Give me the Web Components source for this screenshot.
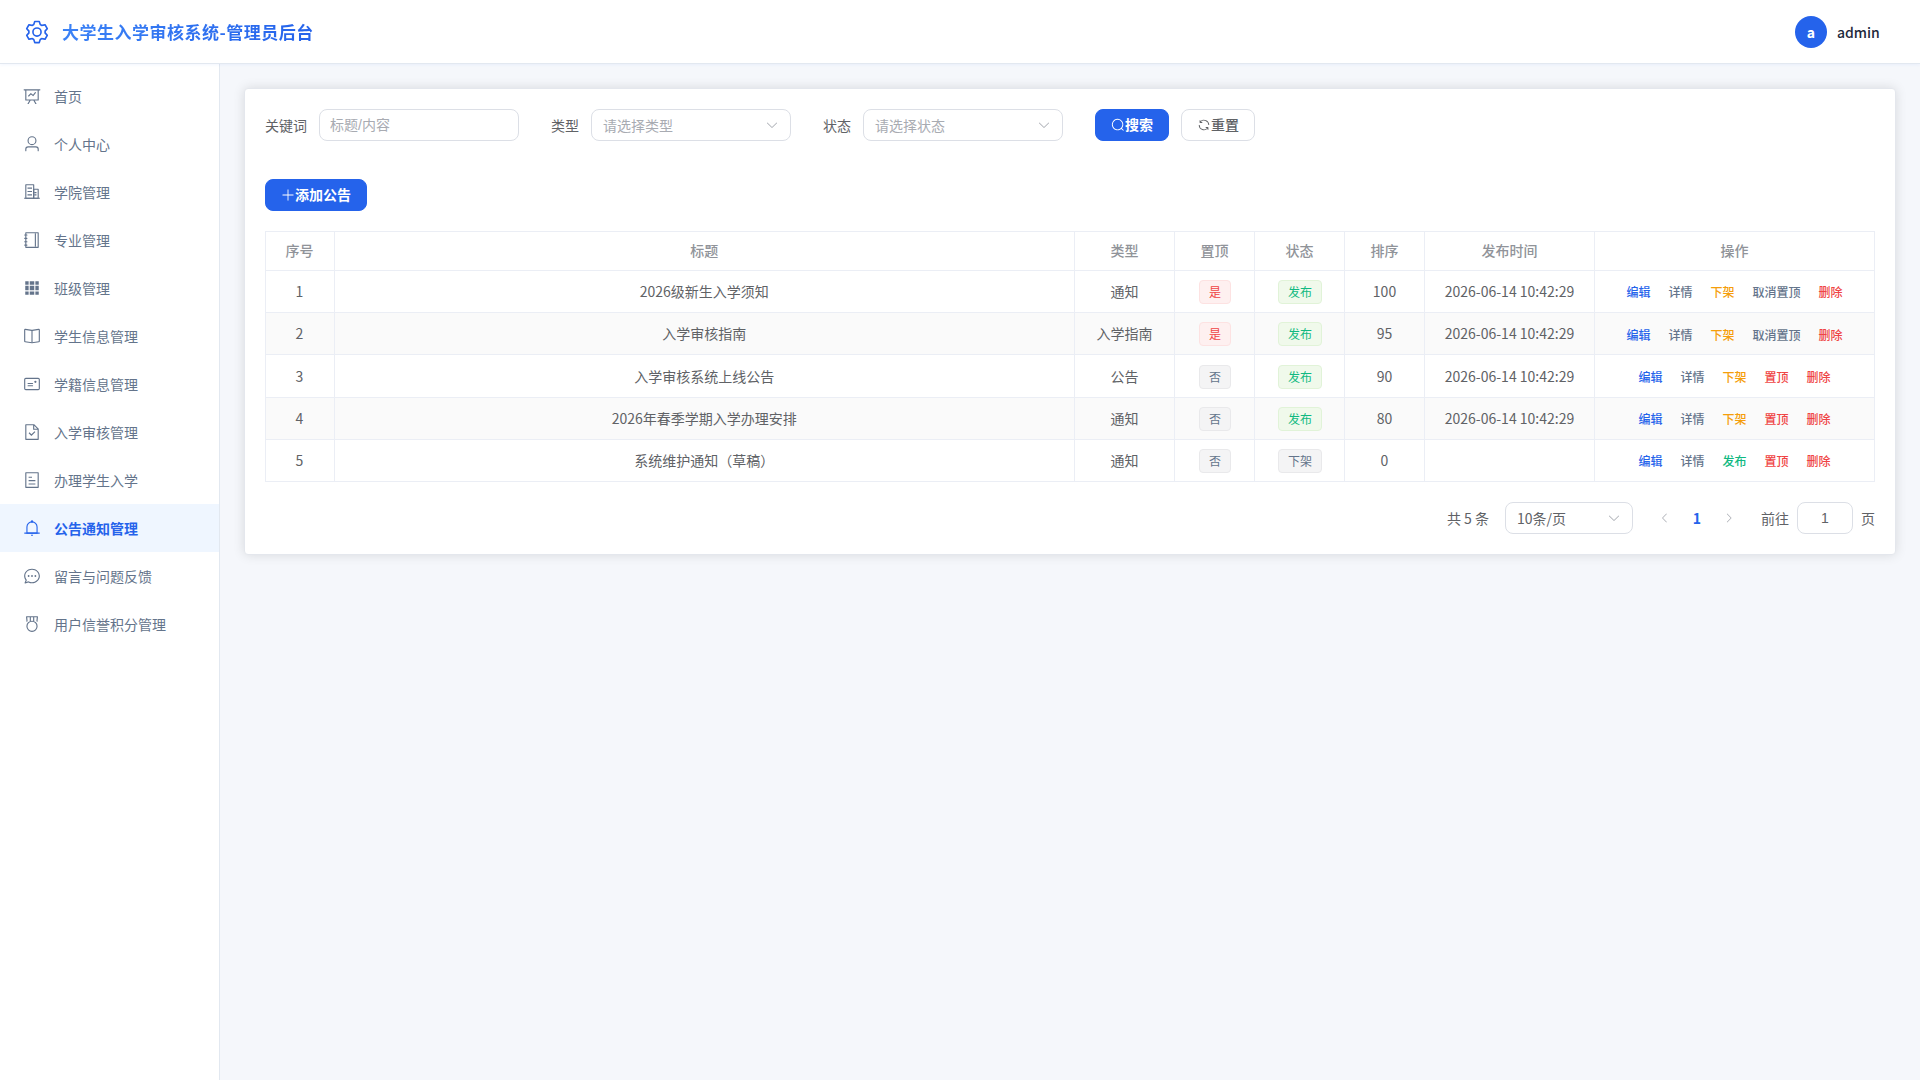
<!DOCTYPE html>
<html lang="zh-CN">
<head>
<meta charset="utf-8">
<title>大学生入学审核系统-管理员后台</title>
<style>
  html, body {
    margin: 0;
    height: 100%;
    overflow: hidden;
  }
  body {
    font-family: "Noto Sans CJK SC", sans-serif;
    font-size: 14px;
    color: #606266;
    background: #f5f7fb;
  }
</style>
</head>
<body>
<admin-layout>
  <admin-header slot="header" title-text="大学生入学审核系统-管理员后台" user="admin"></admin-header>
  <side-menu slot="aside">
    <menu-item icon="dataLine">首页</menu-item>
    <menu-item icon="user">个人中心</menu-item>
    <menu-item icon="office">学院管理</menu-item>
    <menu-item icon="notebook">专业管理</menu-item>
    <menu-item icon="grid">班级管理</menu-item>
    <menu-item icon="reading">学生信息管理</menu-item>
    <menu-item icon="postcard">学籍信息管理</menu-item>
    <menu-item icon="docChecked">入学审核管理</menu-item>
    <menu-item icon="tickets">办理学生入学</menu-item>
    <menu-item icon="bell" active>公告通知管理</menu-item>
    <menu-item icon="chat">留言与问题反馈</menu-item>
    <menu-item icon="medal">用户信誉积分管理</menu-item>
  </side-menu>
  <page-card>
    <search-form>
      <form-item label="关键词"><text-input placeholder="标题/内容"></text-input></form-item>
      <form-item label="类型"><select-box placeholder="请选择类型"></select-box></form-item>
      <form-item label="状态"><select-box placeholder="请选择状态"></select-box></form-item>
      <ui-button slot="actions" type="primary" icon="search">搜索</ui-button>
      <ui-button slot="actions" icon="refresh">重置</ui-button>
    </search-form>
    <ui-button class="add" type="primary" icon="plus">添加公告</ui-button>
    <notice-table></notice-table>
    <page-nav total="5"></page-nav>
  </page-card>
</admin-layout>

<script>
const ICONS = {
  setting: 'M600.704 64a32 32 0 0 1 30.464 22.208l35.2 109.376c14.784 7.232 28.928 15.36 42.432 24.512l112.384-24.192a32 32 0 0 1 34.432 15.36L944.32 364.8a32 32 0 0 1-4.032 37.504l-77.12 85.12a357.12 357.12 0 0 1 0 49.024l77.12 85.248a32 32 0 0 1 4.032 37.504l-88.704 153.6a32 32 0 0 1-34.432 15.296L708.8 803.904c-13.44 9.088-27.648 17.28-42.368 24.512l-35.264 109.376A32 32 0 0 1 600.704 960H423.296a32 32 0 0 1-30.464-22.208L357.696 828.48a351.616 351.616 0 0 1-42.56-24.64l-112.32 24.256a32 32 0 0 1-34.432-15.36L79.68 659.2a32 32 0 0 1 4.032-37.504l77.12-85.248a357.12 357.12 0 0 1 0-48.896l-77.12-85.248A32 32 0 0 1 79.68 364.8l88.704-153.6a32 32 0 0 1 34.432-15.296l112.32 24.256c13.568-9.152 27.776-17.408 42.56-24.64l35.2-109.312A32 32 0 0 1 423.232 64H600.64zm-23.424 64H446.72l-36.352 113.088-24.512 11.968a294.113 294.113 0 0 0-34.816 20.096l-22.656 15.36-116.224-25.088-65.28 113.152 79.68 88.192-1.92 27.136a293.12 293.12 0 0 0 0 40.192l1.92 27.136-79.808 88.192 65.344 113.152 116.224-25.024 22.656 15.296a294.113 294.113 0 0 0 34.816 20.096l24.512 11.968L446.72 896h130.688l36.48-113.152 24.448-11.904a288.282 288.282 0 0 0 34.752-20.096l22.592-15.296 116.288 25.024 65.28-113.152-79.744-88.192 1.92-27.136a293.12 293.12 0 0 0 0-40.256l-1.92-27.136 79.808-88.128-65.344-113.152-116.288 24.96-22.592-15.232a287.616 287.616 0 0 0-34.752-20.096l-24.448-11.904L577.344 128zM512 320a192 192 0 1 1 0 384 192 192 0 0 1 0-384m0 64a128 128 0 1 0 0 256 128 128 0 0 0 0-256',
  dataLine: 'M359.168 768H160a32 32 0 0 1-32-32V192H64a32 32 0 0 1 0-64h896a32 32 0 1 1 0 64h-64v544a32 32 0 0 1-32 32H665.216l110.848 192h-73.856L591.36 768H433.024L322.176 960H248.32zM832 192H192v512h640zM342.656 534.656a32 32 0 1 1-45.312-45.312L444.992 341.76l125.44 94.08L679.04 300.032a32 32 0 1 1 49.92 39.936L581.632 524.224 451.008 426.24 342.656 534.592z',
  user: 'M512 512a192 192 0 1 0 0-384 192 192 0 0 0 0 384m0 64a256 256 0 1 1 0-512 256 256 0 0 1 0 512m320 320v-96a96 96 0 0 0-96-96H288a96 96 0 0 0-96 96v96a32 32 0 1 1-64 0v-96a160 160 0 0 1 160-160h448a160 160 0 0 1 160 160v96a32 32 0 1 1-64 0',
  office: ['M192 128v704h384V128zm-32-64h448a32 32 0 0 1 32 32v768a32 32 0 0 1-32 32H160a32 32 0 0 1-32-32V96a32 32 0 0 1 32-32', 'M256 256h256v64H256zm0 192h256v64H256zm0 192h256v64H256zm384-128h128v64H640zm0 128h128v64H640zM64 832h896v64H64z', 'M640 384v448h192V384zm-32-64h256a32 32 0 0 1 32 32v512a32 32 0 0 1-32 32H608a32 32 0 0 1-32-32V352a32 32 0 0 1 32-32'],
  notebook: ['M192 128v768h640V128zm-32-64h704a32 32 0 0 1 32 32v832a32 32 0 0 1-32 32H160a32 32 0 0 1-32-32V96a32 32 0 0 1 32-32', 'M672 128h64v768h-64zM96 192h128q32 0 32 32t-32 32H96q-32 0-32-32t32-32m0 192h128q32 0 32 32t-32 32H96q-32 0-32-32t32-32m0 192h128q32 0 32 32t-32 32H96q-32 0-32-32t32-32m0 192h128q32 0 32 32t-32 32H96q-32 0-32-32t32-32'],
  grid: 'M640 384v256H384V384zm64 0h192v256H704zm-64 512H384V704h256zm64 0V704h192v192zm-64-768v192H384V128zm64 0h192v192H704zM320 384v256H128V384zm0 512H128V704h192zm0-768v192H128V128z',
  reading: ['m512 863.36 384-54.848v-638.72L525.568 222.72a96 96 0 0 1-27.136 0L128 169.792v638.72zM137.024 106.432l370.432 52.928a32 32 0 0 0 9.088 0l370.432-52.928A64 64 0 0 1 960 169.792v638.72a64 64 0 0 1-54.976 63.36l-388.48 55.488a32 32 0 0 1-9.088 0l-388.48-55.488A64 64 0 0 1 64 808.512v-638.72a64 64 0 0 1 73.024-63.36', 'M480 192h64v704h-64z'],
  postcard: ['M160 224a32 32 0 0 0-32 32v512a32 32 0 0 0 32 32h704a32 32 0 0 0 32-32V256a32 32 0 0 0-32-32zm0-64h704a96 96 0 0 1 96 96v512a96 96 0 0 1-96 96H160a96 96 0 0 1-96-96V256a96 96 0 0 1 96-96', 'M704 320a64 64 0 1 1 0 128 64 64 0 0 1 0-128M288 448h256q32 0 32 32t-32 32H288q-32 0-32-32t32-32m0 128h256q32 0 32 32t-32 32H288q-32 0-32-32t32-32'],
  docChecked: 'M805.504 320 640 154.496V320zM832 384H576V128H192v768h640zM160 64h480l256 256v608a32 32 0 0 1-32 32H160a32 32 0 0 1-32-32V96a32 32 0 0 1 32-32m318.4 582.144 180.992-180.992L704.64 510.4 478.4 736.64 320 578.304l45.248-45.312z',
  tickets: 'M192 128v768h640V128zm-32-64h704a32 32 0 0 1 32 32v832a32 32 0 0 1-32 32H160a32 32 0 0 1-32-32V96a32 32 0 0 1 32-32m160 448h384v64H320zm0-192h192v64H320zm0 384h384v64H320z',
  bell: ['M512 64a64 64 0 0 1 64 64v64H448v-64a64 64 0 0 1 64-64', 'M256 768h512V448a256 256 0 1 0-512 0zm256-640a320 320 0 0 1 320 320v384H192V448a320 320 0 0 1 320-320', 'M96 768h832q32 0 32 32t-32 32H96q-32 0-32-32t32-32m352 128h128a64 64 0 0 1-128 0'],
  chat: ['m174.72 855.68 135.296-45.12 23.68 11.84C388.096 849.536 448.576 864 512 864c211.84 0 384-166.784 384-352S723.84 160 512 160 128 326.784 128 512c0 69.12 24.96 139.264 70.848 199.232l22.08 28.8-46.272 115.584zm-45.248 82.56A32 32 0 0 1 89.6 896l58.368-145.92C94.72 680.32 64 596.864 64 512 64 299.904 256 96 512 96s448 203.904 448 416-192 416-448 416a461.056 461.056 0 0 1-206.912-48.384l-175.616 58.56z', 'M512 563.2a51.2 51.2 0 1 1 0-102.4 51.2 51.2 0 0 1 0 102.4m192 0a51.2 51.2 0 1 1 0-102.4 51.2 51.2 0 0 1 0 102.4m-384 0a51.2 51.2 0 1 1 0-102.4 51.2 51.2 0 0 1 0 102.4'],
  medal: ['M512 896a256 256 0 1 0 0-512 256 256 0 0 0 0 512m0 64a320 320 0 1 1 0-640 320 320 0 0 1 0 640', 'M171 96a32 32 0 0 1 32-32h618a32 32 0 0 1 32 32l-30 300-62-40 22-228H640v219h-64V128H448v219h-64V128H241l22 228-62 40z'],
  down: 'M831.872 340.864 512 652.672 192.128 340.864a30.592 30.592 0 0 0-42.752 0 29.12 29.12 0 0 0 0 41.6L489.664 714.24a32 32 0 0 0 44.672 0l340.288-331.712a29.12 29.12 0 0 0 0-41.728 30.592 30.592 0 0 0-42.752 0z',
  left: 'M609.408 149.376 277.76 489.6a32 32 0 0 0 0 44.672l331.648 340.352a29.12 29.12 0 0 0 41.728 0 30.592 30.592 0 0 0 0-42.752L339.264 511.936l311.872-319.872a30.592 30.592 0 0 0 0-42.688 29.12 29.12 0 0 0-41.728 0',
  right: 'M340.864 149.312a30.592 30.592 0 0 0 0 42.752L652.736 512 340.864 831.872a30.592 30.592 0 0 0 0 42.752 29.12 29.12 0 0 0 41.728 0L714.24 534.336a32 32 0 0 0 0-44.672L382.592 149.376a29.12 29.12 0 0 0-41.728 0z',
  search: 'm795.904 750.72 124.992 124.928a32 32 0 0 1-45.248 45.248L750.656 795.904a416 416 0 1 1 45.248-45.248zM480 832a352 352 0 1 0 0-704 352 352 0 0 0 0 704',
  refresh: 'M771.776 794.88A384 384 0 0 1 128 512h64a320 320 0 0 0 555.712 216.448H654.72a32 32 0 1 1 0-64h149.056a32 32 0 0 1 32 32v148.928a32 32 0 1 1-64 0v-50.56zM276.288 295.616h92.992a32 32 0 0 1 0 64H220.16a32 32 0 0 1-32-32V178.56a32 32 0 0 1 64 0v50.56A384 384 0 0 1 896.128 512h-64a320 320 0 0 0-555.776-216.384z',
  plus: 'M480 480V128a32 32 0 0 1 64 0v352h352a32 32 0 1 1 0 64H544v352a32 32 0 1 1-64 0V544H128a32 32 0 0 1 0-64z'
};

const ROWS = [
  { title: '2026级新生入学须知', type: '通知', top: true, online: true, sort: 100, time: '2026-06-14 10:42:29' },
  { title: '入学审核指南', type: '入学指南', top: true, online: true, sort: 95, time: '2026-06-14 10:42:29' },
  { title: '入学审核系统上线公告', type: '公告', top: false, online: true, sort: 90, time: '2026-06-14 10:42:29' },
  { title: '2026年春季学期入学办理安排', type: '通知', top: false, online: true, sort: 80, time: '2026-06-14 10:42:29' },
  { title: '系统维护通知（草稿）', type: '通知', top: false, online: false, sort: 0, time: '' }
];

class BaseElement extends HTMLElement {
  connectedCallback() {
    if (this.shadowRoot) return;
    this.attachShadow({ mode: 'open' }).innerHTML = this.template();
  }

  attr(name) {
    return this.getAttribute(name) || '';
  }
}

class UiIcon extends BaseElement {
  template() {
    const paths = [].concat(ICONS[this.attr('name')]);
    return `
      <style>
        :host { display: inline-flex; flex: none; width: 1em; height: 1em; }
        svg { width: 1em; height: 1em; fill: currentColor; }
      </style>
      <svg viewBox="0 0 1024 1024">${paths.map((d) => `<path d="${d}"/>`).join('')}</svg>
    `;
  }
}

class AdminLayout extends BaseElement {
  template() {
    return `
      <style>
        :host { display: flex; flex-direction: column; height: 100vh; }
        .body { display: flex; flex: 1; min-height: 0; }
        main { flex: 1; min-width: 0; padding: 24px; box-sizing: border-box; }
      </style>
      <slot name="header"></slot>
      <div class="body">
        <slot name="aside"></slot>
        <main><slot></slot></main>
      </div>
    `;
  }
}

class AdminHeader extends BaseElement {
  template() {
    return `
      <style>
        :host {
          display: flex;
          align-items: center;
          justify-content: space-between;
          flex: none;
          box-sizing: border-box;
          height: 64px;
          padding: 1px 40.2px 0 24px;
          background: #fff;
          border-bottom: 1px solid #e2e8f0;
          box-shadow: 0 1px 3px rgba(37, 99, 235, 0.06);
          z-index: 1;
        }
        .brand { display: flex; align-items: center; gap: 12px; }
        ui-icon { font-size: 26px; color: #2563eb; }
        .title {
          padding-bottom: 2px;
          font-size: 17px;
          font-weight: 700;
          letter-spacing: 0.5px;
          background: linear-gradient(90deg, #3b82f6, #2563eb);
          -webkit-background-clip: text;
          background-clip: text;
          color: transparent;
        }
        .user { display: flex; align-items: center; gap: 10px; color: #1e293b; font-weight: 500; }
        .avatar {
          display: flex;
          align-items: center;
          justify-content: center;
          width: 32px;
          height: 32px;
          border-radius: 50%;
          background: #2563eb;
          color: #fff;
          font-weight: 700;
        }
      </style>
      <div class="brand">
        <ui-icon name="setting"></ui-icon>
        <span class="title">${this.attr('title-text')}</span>
      </div>
      <div class="user">
        <span class="avatar">${this.attr('user')[0]}</span>
        <span>${this.attr('user')}</span>
      </div>
    `;
  }
}

class SideMenu extends BaseElement {
  template() {
    return `
      <style>
        :host {
          display: flex;
          flex-direction: column;
          flex: none;
          box-sizing: border-box;
          width: 220px;
          padding-top: 8px;
          background: #fff;
          border-right: 1px solid #e2e8f0;
        }
      </style>
      <slot></slot>
    `;
  }
}

class MenuItem extends BaseElement {
  template() {
    return `
      <style>
        :host { display: flex; align-items: center; height: 48px; padding-left: 20px; color: #64748b; }
        :host([active]) { background: #eff6ff; color: #2563eb; font-weight: 600; }
        .icon { display: flex; justify-content: center; width: 24px; margin-right: 10px; font-size: 18px; }
      </style>
      <span class="icon"><ui-icon name="${this.attr('icon')}"></ui-icon></span>
      <slot></slot>
    `;
  }
}

class PageCard extends BaseElement {
  template() {
    return `
      <style>
        :host {
          display: flex;
          flex-direction: column;
          align-items: stretch;
          padding: 20px;
          background: #fff;
          border: 1px solid #e4e7ed;
          border-radius: 4px;
          box-shadow: 0 0 12px rgba(0, 0, 0, 0.12);
        }
        ::slotted(.add) { align-self: flex-start; margin: 38px 0 20px; }
      </style>
      <slot></slot>
    `;
  }
}

class SearchForm extends BaseElement {
  template() {
    return `
      <style>
        :host { display: flex; gap: 32px; }
        .actions { display: flex; gap: 12px; }
      </style>
      <slot></slot>
      <div class="actions"><slot name="actions"></slot></div>
    `;
  }
}

class FormItem extends BaseElement {
  template() {
    return `
      <style>
        :host { display: flex; gap: 12px; line-height: 32px; }
      </style>
      <span>${this.attr('label')}</span>
      <slot></slot>
    `;
  }
}

class TextInput extends BaseElement {
  template() {
    return `
      <style>
        :host {
          display: flex;
          align-items: center;
          box-sizing: border-box;
          width: 200px;
          height: 32px;
          padding: 0 10px;
          border: 1px solid #dcdfe6;
          border-radius: 8px;
          background: #fff;
        }
        input {
          width: 100%;
          height: 30px;
          padding: 0;
          border: 0;
          outline: none;
          background: none;
          font: 14px "Liberation Sans", "Noto Sans CJK SC", sans-serif;
          color: inherit;
          text-align: inherit;
        }
        input::placeholder { color: #a8abb2; }
      </style>
      <input type="text" placeholder="${this.attr('placeholder')}" value="${this.attr('value')}">
    `;
  }
}

class SelectBox extends BaseElement {
  template() {
    const value = this.attr('value');
    return `
      <style>
        :host {
          display: flex;
          align-items: center;
          justify-content: space-between;
          box-sizing: border-box;
          width: 200px;
          height: 32px;
          padding: 0 11px;
          border: 1px solid #dcdfe6;
          border-radius: 8px;
          background: #fff;
          line-height: 24px;
        }
        .placeholder { color: #a8abb2; }
        ui-icon { color: #a8abb2; }
      </style>
      <span class="${value ? '' : 'placeholder'}">${value || this.attr('placeholder')}</span>
      <ui-icon name="down"></ui-icon>
    `;
  }
}

class UiButton extends BaseElement {
  template() {
    return `
      <style>
        :host {
          display: inline-flex;
          align-items: center;
          box-sizing: border-box;
          height: 32px;
          padding: 0 15px;
          border: 1px solid #dcdfe6;
          border-radius: 8px;
          background: #fff;
          font-weight: 500;
          line-height: 1;
        }
        :host([type="primary"]) { background: #2563eb; border-color: #2563eb; color: #fff; font-weight: 600; }
        .text { padding-bottom: 2px; }
      </style>
      <ui-icon name="${this.attr('icon')}"></ui-icon><span class="text"><slot></slot></span>
    `;
  }
}

class UiTag extends BaseElement {
  template() {
    return `
      <style>
        :host {
          display: inline-flex;
          align-items: center;
          box-sizing: border-box;
          height: 24px;
          padding: 0 9px;
          border: 1px solid #e9e9eb;
          border-radius: 4px;
          background: #f4f4f5;
          color: #64748b;
          font-size: 12px;
          line-height: 1;
        }
        :host([type="danger"]) { background: #fef0f0; border-color: #fde2e2; color: #ef4444; }
        :host([type="success"]) { background: #f0f9eb; border-color: #e1f3d8; color: #10b981; }
      </style>
      <slot></slot>
    `;
  }
}

class NoticeTable extends BaseElement {
  template() {
    const heads = ['序号', '标题', '类型', '置顶', '状态', '排序', '发布时间', '操作'];
    return `
      <style>
        :host {
          --line: #ebeef5;
          display: block;
          box-sizing: border-box;
          border-left: 1px solid var(--line);
          border-top: 1px solid var(--line);
        }
        .row {
          display: grid;
          grid-template-columns: 69px 1fr 100px 80px 90px 80px 170px 280px;
          height: 42.2px;
        }
        .row.head { height: 39px; color: #909399; font-weight: 500; }
        .row.striped { background: #fafafa; }
        .cell {
          display: flex;
          align-items: center;
          justify-content: center;
          box-sizing: border-box;
          padding-top: 0.2px;
          border-right: 1px solid var(--line);
          border-bottom: 1px solid var(--line);
          line-height: 23px;
        }
        .cell:first-child { padding-right: 1px; }
        .cell:nth-child(2) { padding-right: 0.6px; }
        .head .cell { padding-top: 0; padding-bottom: 2px; }
        .cell.tag { padding: 1.2px 0 0 1px; }
        .cell.ops { padding-top: 0.6px; gap: 18px; font-size: 12px; font-weight: 500; color: #64748b; }
        .blue { color: #2563eb; }
        .orange { color: #f59e0b; }
        .green { color: #10b981; }
        .red { color: #ef4444; }
      </style>
      <div class="row head">${heads.map((h) => `<div class="cell">${h}</div>`).join('')}</div>
      ${ROWS.map((row, i) => this.renderRow(row, i)).join('')}
    `;
  }

  renderRow(row, i) {
    return `
      <div class="row ${i % 2 ? 'striped' : ''}">
        <div class="cell">${i + 1}</div>
        <div class="cell">${row.title}</div>
        <div class="cell">${row.type}</div>
        <div class="cell tag"><ui-tag type="${row.top ? 'danger' : 'info'}">${row.top ? '是' : '否'}</ui-tag></div>
        <div class="cell tag"><ui-tag type="${row.online ? 'success' : 'info'}">${row.online ? '发布' : '下架'}</ui-tag></div>
        <div class="cell">${row.sort}</div>
        <div class="cell">${row.time}</div>
        <div class="cell ops">
          <span class="blue">编辑</span>
          <span>详情</span>
          <span class="${row.online ? 'orange' : 'green'}">${row.online ? '下架' : '发布'}</span>
          <span class="${row.top ? '' : 'red'}">${row.top ? '取消置顶' : '置顶'}</span>
          <span class="red">删除</span>
        </div>
      </div>
    `;
  }
}

class PageNav extends BaseElement {
  template() {
    return `
      <style>
        :host { display: flex; align-items: center; justify-content: flex-end; gap: 16px; margin-top: 20px; line-height: 32px; height: 32px; }
        select-box { width: 128px; }
        .pager { display: flex; }
        .pager > * { display: flex; align-items: center; justify-content: center; width: 32px; height: 32px; }
        .arrow { font-size: 12px; color: #a8abb2; }
        .current { color: #2563eb; font-weight: 700; }
        .jump { display: flex; align-items: center; gap: 8px; }
        text-input { width: 56px; text-align: center; }
      </style>
      <span>共 ${this.attr('total')} 条</span>
      <select-box value="10条/页"></select-box>
      <div class="pager">
        <span class="arrow"><ui-icon name="left"></ui-icon></span>
        <span class="current">1</span>
        <span class="arrow"><ui-icon name="right"></ui-icon></span>
      </div>
      <div class="jump">
        <span>前往</span>
        <text-input value="1"></text-input>
        <span>页</span>
      </div>
    `;
  }
}

customElements.define('ui-icon', UiIcon);
customElements.define('admin-layout', AdminLayout);
customElements.define('admin-header', AdminHeader);
customElements.define('side-menu', SideMenu);
customElements.define('menu-item', MenuItem);
customElements.define('page-card', PageCard);
customElements.define('search-form', SearchForm);
customElements.define('form-item', FormItem);
customElements.define('text-input', TextInput);
customElements.define('select-box', SelectBox);
customElements.define('ui-button', UiButton);
customElements.define('ui-tag', UiTag);
customElements.define('notice-table', NoticeTable);
customElements.define('page-nav', PageNav);
</script>
</body>
</html>
